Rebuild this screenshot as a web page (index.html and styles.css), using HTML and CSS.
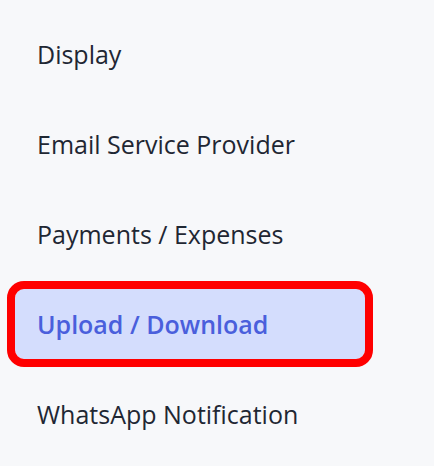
FILE: index.html
```html
<!DOCTYPE html>
<html lang="en">

<head>
    <meta charset="UTF-8">
    <meta name="viewport" content="width=device-width, initial-scale=1.0">
    <title>Settings</title>
    <link rel="stylesheet" href="styles.css">
</head>

<body>
    <nav class="settings-menu">
        <a class="menu-item" href="#display">Display</a>
        <a class="menu-item" href="#email">Email Service Provider</a>
        <a class="menu-item" href="#payments">Payments / Expenses</a>
        <a class="menu-item active" href="#upload">Upload / Download</a>
        <a class="menu-item" href="#whatsapp">WhatsApp Notification</a>
    </nav>
</body>

</html>
```
FILE: styles.css
```css
* {
    box-sizing: border-box;
}
body {
    margin: 0;
    height: 100vh;
    background-color: #f7f8fa;
    font-family: "Open Sans", "Noto Sans", sans-serif;
}
.settings-menu {
    display: flex;
    flex-direction: column;
    gap: 20px;
    width: 350px;
    margin-left: 15px;
    padding-top: 19px;
}
.menu-item {
    display: flex;
    align-items: center;
    height: 70px;
    padding-left: 22px;
    border-radius: 9px;
    font-size: 25px;
    color: #1f2733;
    text-decoration: none;
}
.menu-item.active {
    background-color: #d4ddfd;
    color: #4a5fdc;
    font-weight: 600;
    outline: 8px solid #ff0000;
}
```
